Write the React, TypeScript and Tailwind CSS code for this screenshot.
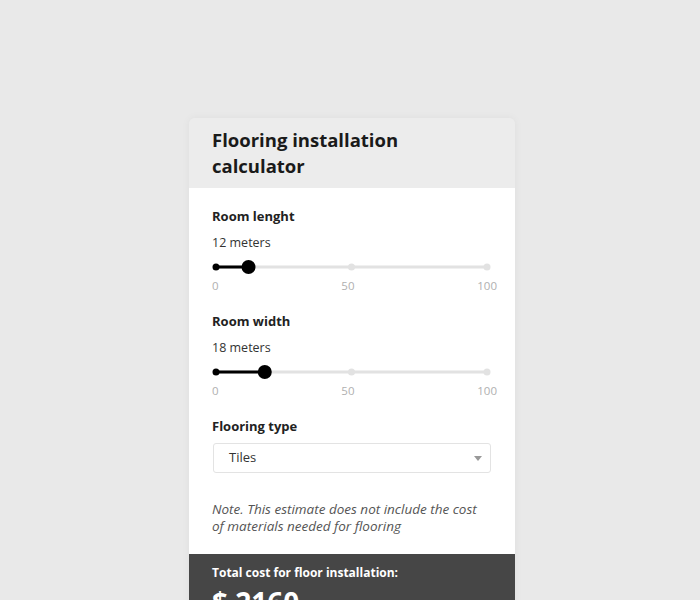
import React from "react";

function Slider({ value }: { value: number }) {
  const x = 4 + (value / 100) * 271;
  return (
    <div className="flex flex-col gap-[4px] w-[285px]">
      <svg width="286" height="14" viewBox="0 0 286 14">
        <line x1="4" y1="7" x2="275" y2="7" stroke="#e2e2e2" strokeWidth="3" strokeLinecap="round" />
        <line x1="4" y1="7" x2={x} y2="7" stroke="#000" strokeWidth="3" />
        <circle cx="4" cy="7" r="3.5" fill="#000" />
        <circle cx="139.5" cy="7" r="3.5" fill="#e2e2e2" />
        <circle cx="275" cy="7" r="3.5" fill="#e2e2e2" />
        <circle cx={x} cy="7" r="7" fill="#000" />
      </svg>
      <div className="flex justify-between text-[11.5px] leading-[16px] text-[#b0b0b0]">
        <span>0</span>
        <span>50</span>
        <span>100</span>
      </div>
    </div>
  );
}

function Field({ label, value, children }: { label: string; value?: string; children?: React.ReactNode }) {
  return (
    <div className="flex flex-col">
      <div className="text-[13px] leading-[18px] font-bold text-[#222]">{label}</div>
      {value && <div className="text-[12.5px] leading-[18px] mt-[9px] mb-[8px] text-[#333]">{value}</div>}
      {children}
    </div>
  );
}

export default function App() {
  return (
    <div className="min-h-[600px] bg-[#e9e9e9] pl-[4px] overflow-hidden" style={{ fontFamily: '"Open Sans", sans-serif' }}>
      <div className="flex justify-center pt-[118px]">
        <div className="w-[326px] flex flex-col rounded-t-[6px] shadow-[0_0_8px_rgba(0,0,0,0.05)] overflow-hidden">
          <div className="bg-[#ececec] px-[23px] pt-[9px] pb-[9px]">
            <h1 className="text-[18.5px] leading-[26px] font-bold text-[#1a1a1a]">
              Flooring installation
              <br />
              calculator
            </h1>
          </div>
          <div className="bg-white pl-[23px] pr-[22px] pt-[19px] pb-[19px] flex flex-col">
            <div className="flex flex-col gap-[18px]">
              <Field label="Room lenght" value="12 meters">
                <Slider value={12} />
              </Field>
              <Field label="Room width" value="18 meters">
                <Slider value={18} />
              </Field>
              <Field label="Flooring type">
                <div className="mt-[8px] ml-[1px] w-[278px] h-[30px] border border-[#e3e3e3] rounded-[3px] flex items-center justify-between pl-[15px] pr-[8px]">
                  <span className="text-[13px] text-[#333]">Tiles</span>
                  <svg width="8" height="5" viewBox="0 0 8 5"><path d="M0 0h8L4 5z" fill="#999" /></svg>
                </div>
              </Field>
            </div>
            <p className="mt-[28px] max-w-[272px] text-[13.5px] leading-[17px] italic text-[#555]">
              Note. This estimate does not include the cost of materials needed for flooring
            </p>
          </div>
          <div className="bg-[#464646] px-[23px] pt-[10px] pb-[20px] text-white flex flex-col gap-[2px]">
            <div className="text-[12px] leading-[18px] font-bold">Total cost for floor installation:</div>
            <div className="text-[28px] leading-[36px] font-bold">$ 2160</div>
          </div>
        </div>
      </div>
    </div>
  );
}
